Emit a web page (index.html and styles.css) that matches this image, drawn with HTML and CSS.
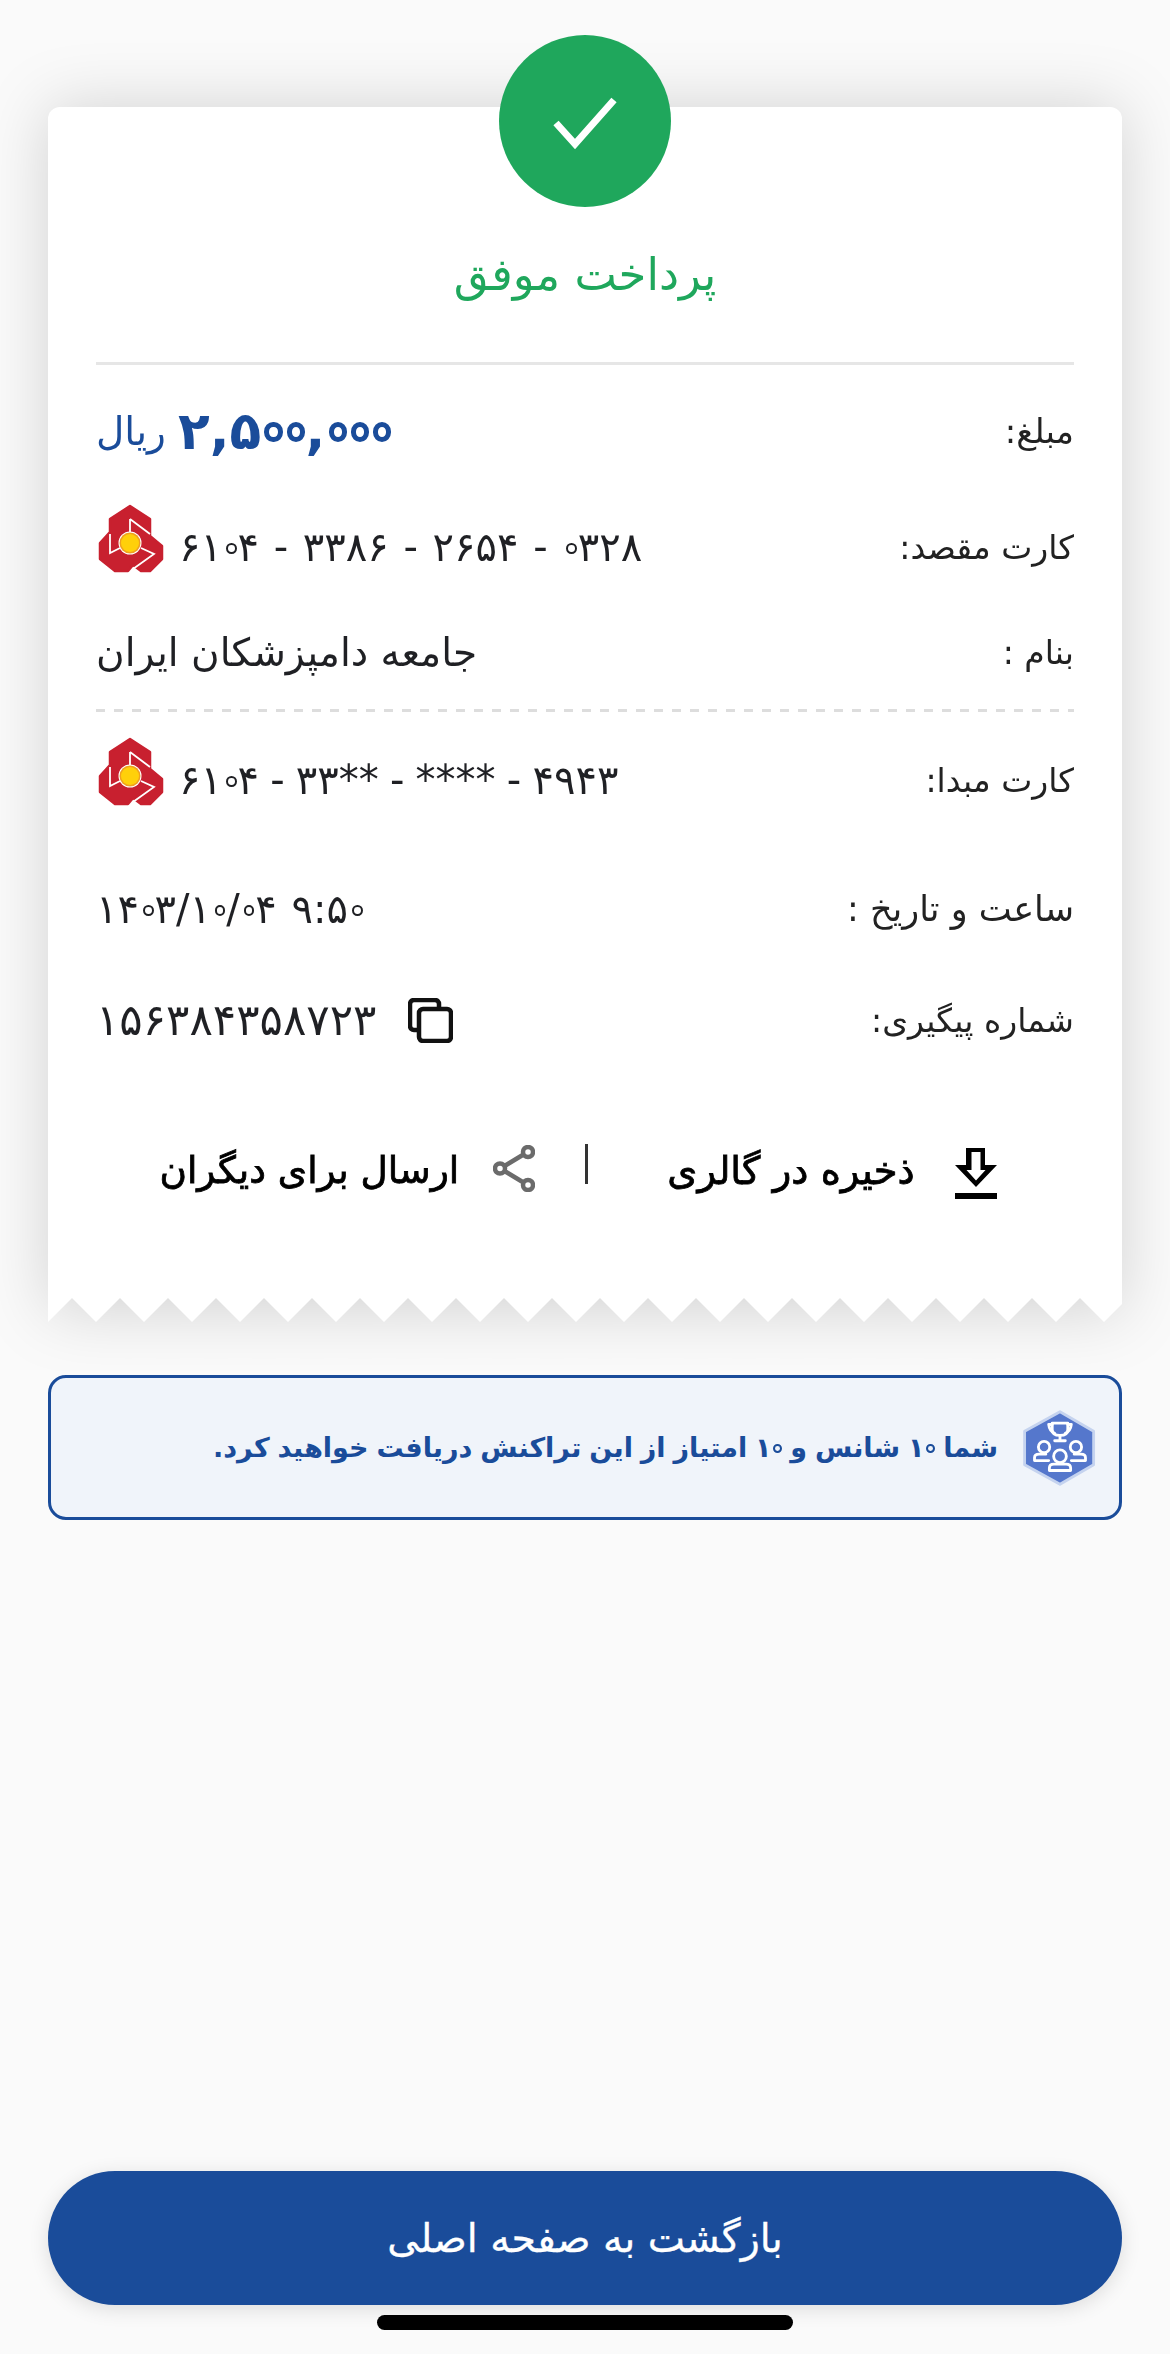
FILE: index.html
```html
<!DOCTYPE html>
<html lang="fa" dir="rtl">
<head>
<meta charset="utf-8">
<title>پرداخت موفق</title>
<link rel="stylesheet" href="styles.css">
</head>
<body>
<main class="screen">
  <section class="receipt-area">
    <div class="sheet">
      <div class="card">
        <header class="head">
          <h1 class="title">پرداخت موفق</h1>
        </header>
        <div class="row row-amount">
          <span class="label label-amount">مبلغ:</span>
          <span class="amount"><span class="amount-num" dir="ltr">۲,۵<span class="z">۰</span><span class="z">۰</span>,<span class="z">۰</span><span class="z">۰</span><span class="z">۰</span></span> <span class="unit">ریال</span></span>
        </div>
        <div class="row row-dest">
          <span class="label">کارت مقصد:</span>
          <span class="value-group" dir="ltr">
            <svg class="bank" viewBox="18 13 72 72"><use href="#bank-logo"/></svg>
            <span class="value">۶۱<span class="z">۰</span>۴ - ۳۳۸۶ - ۲۶۵۴ - <span class="z">۰</span>۳۲۸</span>
          </span>
        </div>
        <div class="row row-name">
          <span class="label">بنام :</span>
          <span class="name">جامعه دامپزشکان ایران</span>
        </div>
        <div class="dashed"></div>
        <div class="row row-src">
          <span class="label">کارت مبدا:</span>
          <span class="value-group" dir="ltr">
            <svg class="bank" viewBox="18 13 72 72"><use href="#bank-logo"/></svg>
            <span class="value value-src">۶۱<span class="z">۰</span>۴ - ۳۳** - **** - ۴۹۴۳</span>
          </span>
        </div>
        <div class="row row-date">
          <span class="label label-date">ساعت و تاریخ :</span>
          <span class="value" dir="ltr">۱۴<span class="z">۰</span>۳/۱<span class="z">۰</span>/<span class="z">۰</span>۴ ۹:۵<span class="z">۰</span></span>
        </div>
        <div class="row row-track">
          <span class="label">شماره پیگیری:</span>
          <span class="value-group track" dir="ltr">
            <span class="value value-track">۱۵۶۳۸۴۳۵۸۷۲۳</span>
            <svg class="copy" viewBox="407 999 45 45" fill="none" stroke="#111" stroke-width="4.5">
              <path d="M416 1031h-3a4 4 0 0 1-4-4v-22a4 4 0 0 1 4-4h21a4 4 0 0 1 4 4v4"/>
              <rect x="418" y="1010" width="32" height="32" rx="4"/>
            </svg>
          </span>
        </div>
        <div class="actions">
          <button class="action save" type="button">
            <svg class="download" viewBox="954 1148 42 51">
              <path fill-rule="evenodd" d="M965 1148h19v17h12l-21 22-21-22h11zM970.500 1152v18h-5l9.500 10.500 9.500-10.500h-5v-18z"/>
              <rect x="954" y="1193" width="42" height="6"/>
            </svg>
            <span>ذخیره در گالری</span>
          </button>
          <span class="sep"></span>
          <button class="action share" type="button">
            <svg class="share-icon" viewBox="492 1145 42 47" fill="none" stroke="#6b6b6b" stroke-width="4.500">
              <circle cx="527" cy="1152" r="5"/>
              <circle cx="499" cy="1168.500" r="5"/>
              <circle cx="527" cy="1185" r="5"/>
              <path d="M522.500 1154.500l-19 11.500M522.500 1182.500l-19-11.500"/>
            </svg>
            <span>ارسال برای دیگران</span>
          </button>
        </div>
      </div>
      <svg class="zigzag" viewBox="0 0 1074 24" preserveAspectRatio="none">
        <polygon fill="#fff" points="0,0 1074,0 1074,6 1056,24 1032,0 1008,24 984,0 960,24 936,0 912,24 888,0 864,24 840,0 816,24 792,0 768,24 744,0 720,24 696,0 672,24 648,0 624,24 600,0 576,24 552,0 528,24 504,0 480,24 456,0 432,24 408,0 384,24 360,0 336,24 312,0 288,24 264,0 240,24 216,0 192,24 168,0 144,24 120,0 96,24 72,0 48,24 24,0 0,24"/>
      </svg>
    </div>
    <div class="badge">
      <svg viewBox="0 0 172 172" class="check" fill="none" stroke="#fff" stroke-width="7">
        <path d="M57 88l19 21 39-44"/>
      </svg>
    </div>
  </section>

  <aside class="notice">
    <svg class="hex" viewBox="62 30 226 225">
      <path d="M175 40L270 95V190L175 245L75 190V95Z" fill="#5577cc" stroke="#c5d3ef" stroke-width="8" stroke-linejoin="round"/>
      <g fill="none" stroke="#fff" stroke-width="8" stroke-linecap="round" stroke-linejoin="round">
        <path d="M153 72H197V90Q197 107 175 107Q153 107 153 90Z"/>
        <path d="M153 76H143Q145 95 160 101M197 76H207Q205 95 190 101M175 107V117M160 122H190"/>
        <circle cx="175" cy="166" r="18"/>
        <path d="M145 206V199Q145 188 158 188H192Q205 188 205 199V206Z"/>
        <circle cx="130" cy="140" r="16"/>
        <path d="M143 178H103V170Q103 160 116 160H135"/>
        <circle cx="220" cy="140" r="16"/>
        <path d="M207 178H247V170Q247 160 234 160H215"/>
      </g>
    </svg>
    <p class="notice-text">شما <bdi dir="ltr">۱<span class="z">۰</span></bdi> شانس و <bdi dir="ltr">۱<span class="z">۰</span></bdi> امتیاز از این تراکنش دریافت خواهید کرد.</p>
  </aside>

  <div class="spacer"></div>

  <button class="back" type="button">بازگشت به صفحه اصلی</button>
  <div class="home-bar"></div>
</main>

<svg class="defs" width="0" height="0" aria-hidden="true">
  <defs>
    <g id="bank-logo">
      <path d="M52 15L72 28V45L84 55V68L72 80H63L55 74L50 80H37L22 68V52L32 41V28Z" fill="#c8202f" stroke="#c8202f" stroke-width="2.500" stroke-linejoin="round"/>
      <path d="M52 28V45M52 28L72 43M32 43V62L42 57M63 57L76 63L55 78" fill="none" stroke="#fff" stroke-width="1.800"/>
      <circle cx="52" cy="52" r="11.500" fill="#fff"/>
      <circle cx="52" cy="52" r="10.500" fill="#f0a020"/>
      <circle cx="52" cy="52" r="9" fill="#ffd00a"/>
    </g>
  </defs>
</svg>
</body>
</html>
```
FILE: styles.css
```css
*, *::before { box-sizing: border-box; }
html, body { margin: 0; padding: 0; }
body {
  background: #fafafa;
  font-family: "DejaVu Sans", "Noto Sans", sans-serif;
  color: #1f2024;
}
.screen {
  position: relative;
  width: 1170px;
  height: 2354px;
  display: flex;
  flex-direction: column;
  overflow: hidden;
}
.receipt-area {
  position: relative;
  height: 1371px;
  padding: 107px 48px 0;
  overflow: hidden;
  flex: none;
}
.sheet {
  filter: drop-shadow(0 0 32px rgba(0, 0, 0, 0.16));
}
.card {
  background: #fff;
  border-radius: 12px 12px 0 0;
  padding: 0 48px;
  height: 1191px;
}
.zigzag {
  display: block;
  width: 1074px;
  height: 24px;
}
.badge {
  position: absolute;
  top: 35px;
  left: 499px;
  width: 172px;
  height: 172px;
  border-radius: 50%;
  background: #1fa75c;
}
.check { display: block; width: 172px; height: 172px; }
.head {
  height: 258px;
  border-bottom: 3px solid #e6e6e6;
  padding-top: 138px;
  margin-bottom: 20px;
}
.title {
  margin: 0;
  text-align: center;
  font-size: 45px;
  line-height: 60px;
  font-weight: 400;
  color: #1fa75c;
}
.row {
  display: flex;
  justify-content: space-between;
  align-items: center;
}
.row-amount { height: 92px; }
.row-dest { height: 140px; }
.row-name { height: 70px; }
.row-src { height: 136px; }
.row-date { height: 122px; }
.row-track { height: 100px; }
.label { font-size: 33px; color: #222; white-space: nowrap; }
.label-amount { font-size: 34px; }
.label-date { font-size: 35px; }
.value { font-size: 40px; word-spacing: 2px; white-space: nowrap; --ink: #1f2024; }
.value-src { word-spacing: -1.500px; }
.value-track { font-size: 43.500px; }
.name { font-size: 39px; white-space: nowrap; }
.amount { color: #1a4c9a; white-space: nowrap; display: flex; align-items: center; gap: 12px; }
.amount-num { font-size: 52px; font-weight: 700; --ink: #1a4c9a; }
.unit { font-size: 39px; }
.z {
  position: relative;
  font-size: 0.72em;
  color: transparent;
}
.z::before {
  content: "";
  position: absolute;
  left: 0.13em;
  bottom: 0.48em;
  width: 0.375em;
  height: 0.375em;
  border: 0.087em solid var(--ink);
  border-radius: 50%;
}
.amount-num .z { font-size: 0.7em; }
.amount-num .z::before {
  left: 0.09em;
  bottom: 0.45em;
  width: 0.5em;
  height: 0.53em;
  border-width: 0.138em;
}
.value-group { display: flex; align-items: center; gap: 11px; }
.track { gap: 32px; }
.bank { width: 72px; height: 72px; margin-bottom: 14px; flex: none; }
.copy { width: 45px; height: 45px; flex: none; }
.dashed {
  height: 3px;
  margin-top: 22px;
  background: repeating-linear-gradient(to right, #dddddd 0 9px, transparent 9px 18px);
}
.actions {
  height: 200px;
  display: flex;
  align-items: center;
  justify-content: center;
  padding-inline-start: 14px;
}
.action {
  display: flex;
  align-items: center;
  background: none;
  border: 0;
  padding: 0;
  color: #000;
  font: 400 38px "DejaVu Sans", sans-serif;
  -webkit-text-stroke: 0.8px #000;
  white-space: nowrap;
}
.save { gap: 40px; margin-inline-end: 79px; }
.share { gap: 34px; margin-inline-start: 50px; }
.save span { font-size: 38.500px; }
.share span { font-size: 37.500px; }
.download { width: 42px; height: 51px; flex: none; margin-top: 6px; }
.share-icon { width: 42px; height: 47px; flex: none; margin-bottom: 4px; }
.sep { width: 3px; height: 40px; background: #333; flex: none; margin-bottom: 12px; }
.notice {
  margin: 4px 48px 0;
  height: 145px;
  flex: none;
  display: flex;
  align-items: center;
  gap: 22px;
  padding: 0 19px;
  background: #f0f4fa;
  border: 3px solid #1a4c9a;
  border-radius: 18px;
}
.hex { width: 80px; height: 80px; flex: none; }
.notice-text {
  margin: 0;
  font-size: 27px;
  font-weight: 700;
  word-spacing: -1.500px;
  color: #1a4c9a;
  white-space: nowrap;
  --ink: #1a4c9a;
}
.notice-text .z { font-size: 0.66em; }
.notice-text .z::before {
  left: 0.088em;
  bottom: 0.47em;
  width: 0.5em;
  height: 0.5em;
  border-width: 0.135em;
}
.spacer { flex: 1; }
.back {
  flex: none;
  margin: 0 48px;
  height: 134px;
  border: 0;
  border-radius: 67px;
  background: #1a4c9a;
  color: #fff;
  font: 400 39.500px "DejaVu Sans", sans-serif;
  -webkit-text-stroke: 0.3px #fff;
  box-shadow: 0 4px 20px rgba(0, 0, 0, 0.12);
}
.home-bar {
  flex: none;
  width: 416px;
  height: 15px;
  margin: 10px auto 24px;
  background: #000;
  border-radius: 8px;
}
.defs { position: absolute; }
```
